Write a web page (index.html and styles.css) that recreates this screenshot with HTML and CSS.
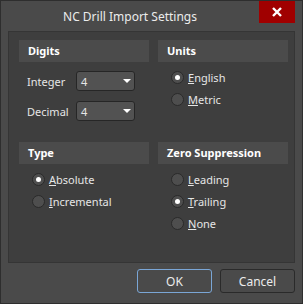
FILE: index.html
```html
<!DOCTYPE html>
<html lang="en">
<head>
    <meta charset="UTF-8">
    <title>NC Drill Import Settings</title>
    <link rel="stylesheet" href="styles.css">
</head>
<body>

    <div class="window">
        <div class="titlebar">
            <div class="title">NC Drill Import Settings</div>
            <div class="close">
                <svg width="10" height="10" viewBox="0 0 10 10">
                    <path d="M1 1 L9 9 M9 1 L1 9" stroke="#fff" stroke-width="2.4"/>
                </svg>
            </div>
        </div>

        <div class="panel">
            <!-- Digits -->
            <div class="group">
                <div class="group-head">Digits</div>
                <div class="field">
                    <span class="label">Integer</span>
                    <div class="combo"><span>4</span><i class="arrow"></i></div>
                </div>
                <div class="field">
                    <span class="label">Decimal</span>
                    <div class="combo"><span>4</span><i class="arrow"></i></div>
                </div>
            </div>

            <!-- Units -->
            <div class="group">
                <div class="group-head">Units</div>
                <div class="radios">
                    <div class="radio checked"><i></i><span><u>E</u>nglish</span></div>
                    <div class="radio"><i></i><span><u>M</u>etric</span></div>
                </div>
            </div>

            <!-- Type -->
            <div class="group">
                <div class="group-head">Type</div>
                <div class="radios">
                    <div class="radio checked"><i></i><span><u>A</u>bsolute</span></div>
                    <div class="radio"><i></i><span><u>I</u>ncremental</span></div>
                </div>
            </div>

            <!-- Zero Suppression -->
            <div class="group">
                <div class="group-head">Zero Suppression</div>
                <div class="radios">
                    <div class="radio"><i></i><span><u>L</u>eading</span></div>
                    <div class="radio checked"><i></i><span><u>T</u>railing</span></div>
                    <div class="radio"><i></i><span><u>N</u>one</span></div>
                </div>
            </div>
        </div>

        <div class="footer">
            <button class="btn btn-default">OK</button>
            <button class="btn">Cancel</button>
        </div>
    </div>

</body>
</html>
```

FILE: styles.css
```css
body {
    margin: 0;
    background: #4a4a4a;
    font-family: "Noto Sans", "Open Sans", sans-serif;
    font-size: 11px;
    color: #e6e6e6;
}

.window {
    width: 303px;
    height: 304px;
    box-sizing: border-box;
    border: 1px solid #2e2e2e;
    background: #4a4a4a;
    display: flex;
    flex-direction: column;
}

.titlebar {
    height: 30px;
    display: flex;
    align-items: flex-start;
}

.title {
    flex: 1;
    text-align: center;
    font-size: 12px;
    line-height: 31px;
    color: #ececec;
}

.close {
    width: 36px;
    height: 22px;
    margin-right: 7px;
    background: #a00000;
    display: flex;
    align-items: center;
    justify-content: center;
}

.panel {
    margin: 0 7px;
    height: 232px;
    box-sizing: border-box;
    border: 1px solid #353535;
    background: #3e3e3e;
    padding: 8px 6px 0 10px;
    display: grid;
    grid-template-columns: 130px 130px;
    grid-template-rows: 102px auto;
    column-gap: 9px;
}

.group-head {
    height: 22px;
    line-height: 22px;
    background: #4b4b4b;
    padding-left: 9px;
    font-weight: bold;
    color: #fff;
}

.field {
    display: flex;
    align-items: center;
    margin-top: 9px;
    padding-left: 8px;
}

.field + .field {
    margin-top: 10px;
}

.label {
    width: 49px;
}

.combo {
    width: 59px;
    height: 20px;
    box-sizing: border-box;
    border: 1px solid #262626;
    border-radius: 3px;
    background: #525252;
    display: flex;
    align-items: center;
    justify-content: space-between;
    padding: 0 3px 0 4px;
}

.arrow {
    width: 0;
    height: 0;
    border-left: 4px solid transparent;
    border-right: 4px solid transparent;
    border-top: 4px solid #fff;
}

.radios {
    padding: 4px 0 0 13px;
}

.radio {
    display: flex;
    align-items: center;
    height: 22px;
}

.radio i {
    width: 13px;
    height: 13px;
    box-sizing: border-box;
    border-radius: 50%;
    border: 1px solid #2a2a2a;
    background: #4e4e4e;
    margin-right: 4px;
    display: flex;
    align-items: center;
    justify-content: center;
}

.radio.checked i::after {
    content: "";
    width: 5px;
    height: 5px;
    border-radius: 50%;
    background: #fff;
}

.radio u {
    text-decoration-thickness: 1px;
}

.footer {
    display: flex;
    justify-content: flex-end;
    gap: 8px;
    padding: 6px 7px 0 0;
}

.btn {
    width: 75px;
    height: 24px;
    font-family: inherit;
    font-size: 12px;
    color: #ececec;
    background: #4a4a4a;
    border: 1px solid #2a2a2a;
    border-radius: 3px;
    padding: 0;
}

.btn-default {
    border-color: #7aa6d6;
}
```
